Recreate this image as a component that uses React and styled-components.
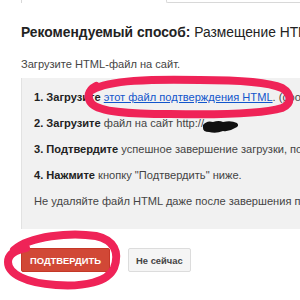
import React from 'react';
import styled, { createGlobalStyle } from 'styled-components';

const GlobalStyle = createGlobalStyle`
  html, body {
    margin: 0;
    padding: 0;
    background: #fff;
    overflow: hidden;
  }
  body {
    font-family: Arial, "Liberation Sans", sans-serif;
    color: #222;
  }
`;

const Page = styled.div`
  position: relative;
  width: 300px;
  height: 300px;
  overflow: hidden;
  padding-left: 21px;
  box-sizing: border-box;
`;

const TopStrip = styled.div`
  display: flex;
  height: 3px;
`;

const TopLeft = styled.div`
  width: 144px;
  border-left: 1px solid #d8d8d8;
`;

const TopField = styled.div`
  flex: 1;
  border-left: 1px solid #d8d8d8;
  border-bottom: 1px solid #d8d8d8;
  border-bottom-left-radius: 2px;
`;

const Heading = styled.h2`
  margin: 21px 0 0;
  font-size: 13.8px;
  line-height: 18px;
  font-weight: normal;
  white-space: nowrap;
  color: #222;
`;

const Strong = styled.b`
  font-weight: bold;
  color: #222;
`;

const Intro = styled.p`
  margin: 14px 0 0;
  font-size: 11.1px;
  line-height: 16px;
  color: #444;
  white-space: nowrap;
`;

const Box = styled.div`
  margin-top: 6px;
  background: #f1f1f1;
  border-left: 1px solid #e2e2e2;
  padding: 11px 0 20px 12px;
  font-size: 11.1px;
  line-height: 16px;
  color: #444;
  white-space: nowrap;
`;

const Steps = styled.ol`
  list-style: none;
  margin: 0;
  padding: 0;
  display: flex;
  flex-direction: column;
  gap: 10px;
`;

const Step = styled.li`
  margin: 0;
`;

const Link = styled.a`
  color: #1155cc;
  text-decoration: underline;
`;

const Note = styled.p`
  margin: 10px 0 0;
`;

const Buttons = styled.div`
  display: flex;
  gap: 18px;
  margin-top: 19px;
`;

const Button = styled.button`
  height: 24px;
  padding: 0 ${(p) => (p.primary ? '8px' : '7px')};
  min-width: ${(p) => (p.primary ? '86px' : '63px')};
  border-radius: 2px;
  font-family: Arial, "Liberation Sans", sans-serif;
  font-size: 9.4px;
  font-weight: bold;
  cursor: pointer;
  background: ${(p) => (p.primary ? '#d14836' : '#f5f5f5')};
  color: ${(p) => (p.primary ? '#fff' : '#444')};
  border: 1px solid ${(p) => (p.primary ? '#c53727' : '#dcdcdc')};
  text-transform: ${(p) => (p.primary ? 'uppercase' : 'none')};
`;

const Marks = styled.svg`
  position: absolute;
  left: 0;
  top: 0;
  pointer-events: none;
`;

export default function App() {
  return (
    <>
      <GlobalStyle />
      <Page>
        <TopStrip>
          <TopLeft />
          <TopField />
        </TopStrip>
        <Heading>
          <Strong>Рекомендуемый способ:</Strong> Размещение HTML-файла
        </Heading>
        <Intro>Загрузите HTML-файл на сайт.</Intro>
        <Box>
          <Steps>
            <Step>
              <Strong>1. Загрузите</Strong> <Link>этот файл подтверждения HTML</Link>. (google
            </Step>
            <Step>
              <Strong>2. Загрузите</Strong> файл на сайт http://
            </Step>
            <Step>
              <Strong>3. Подтвердите</Strong> успешное завершение загрузки, посетив
            </Step>
            <Step>
              <Strong>4. Нажмите</Strong> кнопку "Подтвердить" ниже.
            </Step>
          </Steps>
          <Note>Не удаляйте файл HTML даже после завершения подтверждения</Note>
        </Box>
        <Buttons>
          <Button primary>Подтвердить</Button>
          <Button>Не сейчас</Button>
        </Buttons>

        <Marks width="300" height="300" viewBox="0 0 300 300">
          <path
            d="M203 125 q4 -5 10 -3 q6 -2 10 0 q8 -2 14 1 q3 3 -2 5 q-6 4 -12 3 q-7 3 -14 1 q-6 0 -6 -4 z"
            fill="#111"
          />
          <g fill="none" stroke="#ef2357" strokeWidth="8" strokeLinecap="round" strokeLinejoin="round">
            <path d="M92 90 C110 80 150 79 200 80 C240 80 268 82 282 88 C292 94 292 104 282 108 C262 114 220 115 170 114 C130 114 100 112 92 104 C86 98 88 90 96 86" />
            <path d="M14 250 C30 236 70 232 96 236 C114 240 120 252 114 268 C108 282 84 287 56 285 C26 283 8 274 8 262 C8 254 16 250 26 248" />
          </g>
        </Marks>
      </Page>
    </>
  );
}
